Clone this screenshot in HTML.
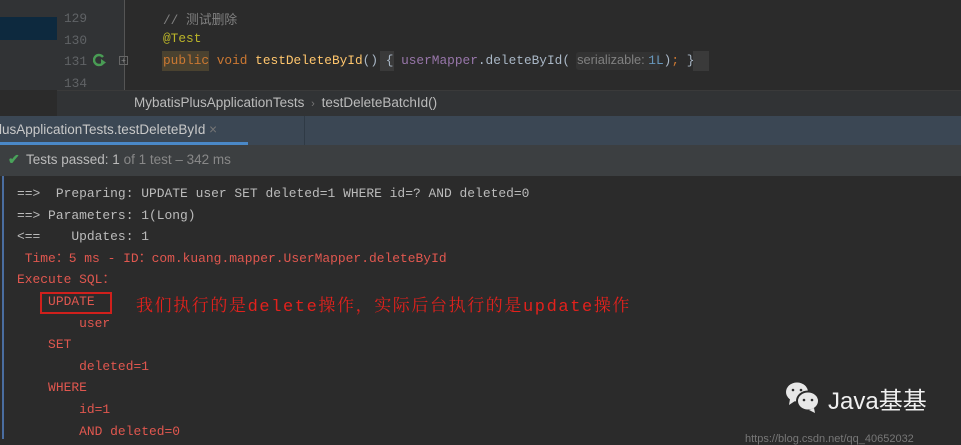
<!DOCTYPE html>
<html><head><meta charset="utf-8"><style>
*{margin:0;padding:0;box-sizing:border-box}
body{width:961px;height:439px;overflow:hidden;background:#2b2b2b;position:relative;font-family:"Liberation Sans","Noto Sans CJK SC",sans-serif}
.a{position:absolute;white-space:pre}
.m{font-family:"Liberation Mono","Noto Sans CJK SC",monospace;font-size:12.8px}
.g{color:#bbbbbb}.r{color:#e0574f}
</style></head><body>
<div class="a" style="left:0;top:0;width:57px;height:90px;background:#313335"></div>
<div class="a" style="left:0;top:17px;width:57px;height:23px;background:#0d293e"></div>
<div class="a" style="left:57px;top:0;width:67px;height:90px;background:#313335"></div>
<div class="a" style="left:124px;top:0;width:1px;height:90px;background:#555"></div>
<div class="a m" style="left:64px;top:8px;color:#606366;line-height:21.7px">129
130
131
134</div>
<svg class="a" style="left:93px;top:53px" width="14" height="14" viewBox="0 0 14 14"><path d="M10 4A5 5 0 1 0 10 10" stroke="#499c54" stroke-width="2.4" fill="none"/><path d="M8 6l5 3.5-5 3.5z" fill="#499c54"/></svg>
<div class="a" style="left:119px;top:56px;width:9px;height:9px;border:1px solid #666;color:#888;font-size:8px;line-height:7px;text-align:center">+</div>
<div class="a m" style="left:163px;top:9px;color:#808080">// 测试删除</div>
<div class="a m" style="left:163px;top:31px;color:#bbb529">@Test</div>
<div class="a" style="left:162px;top:51px;width:47px;height:20px;background:#4a4230"></div>
<div class="a" style="left:380px;top:51px;width:14px;height:20px;background:#3a3a3a"></div>
<div class="a" style="left:576px;top:52px;width:84px;height:18px;background:#333;border-radius:3px"></div>
<div class="a" style="left:693px;top:51px;width:16px;height:20px;background:#3a3a3a"></div>
<div class="a m" style="left:163px;top:52px;color:#cc7832">public void <span style="color:#ffc66d">testDeleteById</span><span style="color:#a9b7c6">() { </span><span style="color:#9876aa">userMapper</span><span style="color:#a9b7c6">.deleteById(</span><span style="font-family:'Liberation Sans';color:#808080">  serializable: </span><span style="color:#6897bb">1L</span><span style="color:#a9b7c6">)</span>; <span style="color:#a9b7c6">}</span></div>
<div class="a" style="left:0;top:90px;width:961px;height:26px;background:#313335;border-top:1px solid #3a3a3a"></div>
<div class="a" style="left:0;top:90px;width:57px;height:26px;background:#2b2b2b"></div>
<div class="a" style="left:134px;top:95px;font-size:13.5px;color:#bbbbbb">MybatisPlusApplicationTests <span style="color:#777;font-size:11px">&nbsp;›&nbsp;</span> testDeleteBatchId()</div>
<div class="a" style="left:0;top:116px;width:961px;height:29px;background:#3b4754"></div>
<div class="a" style="left:304px;top:116px;width:1px;height:29px;background:#2f3a45"></div>
<div class="a" style="left:0;top:142px;width:248px;height:3px;background:#4a88c7"></div>
<div class="a" style="left:-1px;top:122px;font-size:13.5px;color:#c8c8c8">lusApplicationTests.testDeleteById <span style="color:#777">×</span></div>
<div class="a" style="left:0;top:145px;width:961px;height:31px;background:#3c3f41"></div>
<div class="a" style="left:8px;top:151px;font-size:14px;color:#49a35a;font-weight:bold">✔</div>
<div class="a" style="left:26px;top:152px;font-size:13.5px;color:#bbbbbb">Tests passed: 1 <span style="color:#888">of 1 test – 342 ms</span></div>
<div class="a" style="left:2px;top:176px;width:2px;height:263px;background:#4a6da0"></div>
<div class="a m" style="left:17px;top:183px;line-height:21.6px;font-size:12.95px"><span class="g">==>  Preparing: UPDATE user SET deleted=1 WHERE id=? AND deleted=0
==> Parameters: 1(Long)
&lt;==    Updates: 1</span>
<span class="r"> Time：5 ms - ID：com.kuang.mapper.UserMapper.deleteById
Execute SQL：
    UPDATE
        user
    SET
        deleted=1
    WHERE
        id=1
        AND deleted=0</span></div>
<div class="a" style="left:40px;top:292px;width:72px;height:22px;border:2px solid #d0201c"></div>
<div class="a" style="left:136px;top:291px;font-size:17px;letter-spacing:1.6px;color:#e3211c;font-family:'Liberation Mono','Noto Serif CJK SC',serif">我们执行的是delete操作，实际后台执行的是update操作</div>
<svg class="a" style="left:784px;top:380px" width="38" height="34" viewBox="0 0 38 34"><ellipse cx="13" cy="12" rx="11" ry="9.5" fill="#e8e8e8"/><path d="M6 19l-1 6 6-4z" fill="#e8e8e8"/><circle cx="9" cy="10" r="1.3" fill="#2b2b2b"/><circle cx="17" cy="10" r="1.3" fill="#2b2b2b"/><ellipse cx="24" cy="21" rx="11" ry="9.5" fill="#e8e8e8" stroke="#2b2b2b" stroke-width="2"/><path d="M30 28l1 5-6-3z" fill="#e8e8e8"/><circle cx="20" cy="20" r="1.3" fill="#2b2b2b"/><circle cx="28" cy="20" r="1.3" fill="#2b2b2b"/></svg>
<div class="a" style="left:828px;top:381px;font-size:24px;color:#f0f0f0">Java基基</div>
<div class="a" style="left:745px;top:433px;font-size:11px;color:#777">https://blog.csdn.net/qq_40652032</div>
</body></html>
